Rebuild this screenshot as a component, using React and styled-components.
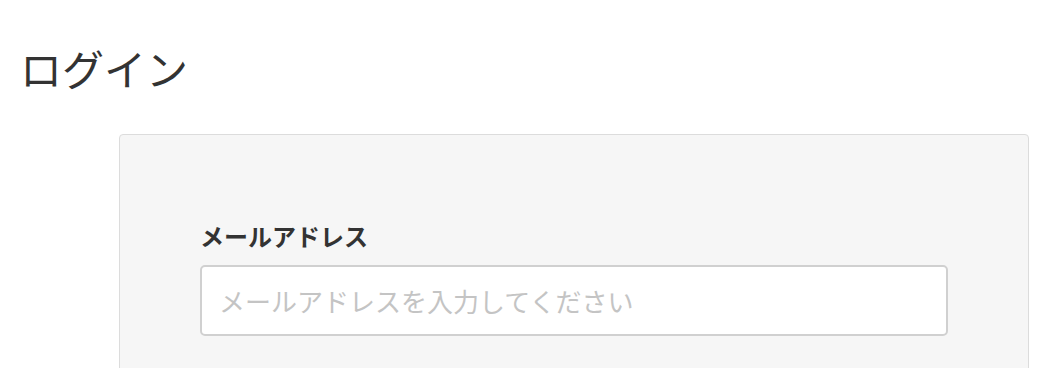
import styled, { createGlobalStyle } from "styled-components"

const GlobalStyle = createGlobalStyle`
  body {
    margin: 0;
    background: #fff;
    font-family: "Noto Sans CJK JP", "Noto Sans", sans-serif;
    color: #333;
  }
`

const Page = styled.div`
  padding: 40px 20px 0 20px;
`

const Title = styled.h1`
  margin: 0;
  font-size: 42px;
  font-weight: 400;
  line-height: 56px;
  color: #333;
`

const Card = styled.div`
  margin: 38px 0 0 99px;
  width: 910px;
  box-sizing: border-box;
  padding: 84px 80px 40px 80px;
  background: #f6f6f6;
  border: 1px solid #dcdcdc;
  border-radius: 4px;
  min-height: 300px;
`

const Label = styled.label`
  display: block;
  font-size: 24px;
  font-weight: 700;
  line-height: 34px;
  color: #333;
  margin-bottom: 12px;
`

const Input = styled.input`
  display: block;
  width: 100%;
  height: 71px;
  box-sizing: border-box;
  padding: 0 17px;
  font-family: inherit;
  font-size: 26px;
  color: #333;
  background: #fff;
  border: 2px solid #d0d0d0;
  border-radius: 5px;
  outline: none;

  &::placeholder {
    color: #c4c4c4;
  }
`

function App () {
  return (
    <Page>
      <GlobalStyle />
      <Title>ログイン</Title>
      <Card>
        <Label htmlFor="email">メールアドレス</Label>
        <Input id="email" type="email" placeholder="メールアドレスを入力してください" />
      </Card>
    </Page>
  )
}

export default App
